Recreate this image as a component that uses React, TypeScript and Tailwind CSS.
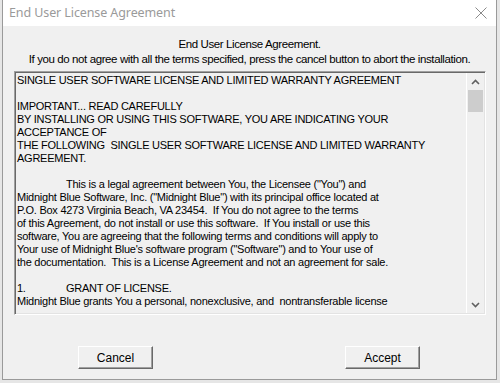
import React from 'react';

const licenseLines: { text: string; indent?: boolean; lead?: string }[] = [
  { text: 'SINGLE USER SOFTWARE LICENSE AND LIMITED WARRANTY AGREEMENT' },
  { text: '' },
  { text: 'IMPORTANT... READ CAREFULLY' },
  { text: 'BY INSTALLING OR USING THIS SOFTWARE, YOU ARE INDICATING YOUR' },
  { text: 'ACCEPTANCE OF' },
  { text: 'THE FOLLOWING  SINGLE USER SOFTWARE LICENSE AND LIMITED WARRANTY' },
  { text: 'AGREEMENT.' },
  { text: '' },
  { text: 'This is a legal agreement between You, the Licensee ("You") and', indent: true },
  { text: 'Midnight Blue Software, Inc. ("Midnight Blue") with its principal office located at' },
  { text: 'P.O. Box 4273 Virginia Beach, VA 23454.  If You do not agree to the terms' },
  { text: 'of this Agreement, do not install or use this software.  If You install or use this' },
  { text: 'software, You are agreeing that the following terms and conditions will apply to' },
  { text: "Your use of Midnight Blue's software program (\"Software\") and to Your use of" },
  { text: 'the documentation.  This is a License Agreement and not an agreement for sale.' },
  { text: '' },
  { text: 'GRANT OF LICENSE.', indent: true, lead: '1.' },
  { text: 'Midnight Blue grants You a personal, nonexclusive, and  nontransferable license' },
];

const DialogButton = ({ label }: { label: string }) => (
  <button className="w-[75px] h-[23px] bg-[#f0f0f0] border border-t-white border-l-white border-r-[#696969] border-b-[#696969] shadow-[inset_-1px_-1px_0_#a0a0a0] text-[12px] text-black leading-none">
    {label}
  </button>
);

export default function App() {
  return (
    <div className="w-[500px] h-[383px] bg-[#e6e6e6] overflow-hidden flex" style={{ fontFamily: '"Liberation Sans", Arial, sans-serif' }}>
      <div className="ml-[2px] w-[495px] h-[380px] border border-t-0 border-[#9a9a9a] bg-[#f0f0f0] flex flex-col">
        {/* Title bar */}
        <div className="h-[26px] bg-white flex items-center justify-between pl-[6px] pr-[9px]">
          <span className="text-[12.5px] text-[#9a9a9a] tracking-[-0.1px]" style={{ fontFamily: '"Noto Sans", sans-serif' }}>
            End User License Agreement
          </span>
          <svg width="12" height="12" viewBox="0 0 12 12" className="mb-[1px]">
            <path d="M0.5 0.5 L11.5 11.5 M11.5 0.5 L0.5 11.5" stroke="#8a8a8a" strokeWidth="1" />
          </svg>
        </div>

        {/* Header */}
        <div className="pt-[11px] text-center text-black text-[11.5px] leading-[15px] tracking-[-0.4px]">
          <div>End User License Agreement.</div>
          <div>If you do not agree with all the terms specified, press the cancel button to abort the installation.</div>
        </div>

        {/* License text */}
        <div className="mt-[4px] ml-[11px] w-[472px] h-[244px] flex border border-t-[#a0a0a0] border-l-[#a0a0a0] border-r-white border-b-white shadow-[inset_1px_1px_0_#696969,inset_-1px_-1px_0_#e3e3e3] overflow-hidden">
          <div className="flex-1 pl-[2px] pt-[2px] text-[11px] leading-[13px] text-black tracking-[-0.25px] whitespace-pre overflow-hidden">
            {licenseLines.map((line, i) => (
              <div key={i} className="h-[13px] flex">
                {line.lead !== undefined ? (
                  <span className="w-[49px]">{line.lead}</span>
                ) : line.indent ? (
                  <span className="w-[49px]" />
                ) : null}
                <span>{line.text}</span>
              </div>
            ))}
          </div>
          {/* Scrollbar */}
          <div className="w-[18px] my-[1px] mr-[1px] bg-[#f0f0f0] border-l border-white flex flex-col items-center">
            <div className="h-[17px] w-full flex items-center justify-center">
              <svg width="9" height="6" viewBox="0 0 9 6">
                <path d="M1 5 L4.5 1.5 L8 5" stroke="#606060" strokeWidth="1.6" fill="none" />
              </svg>
            </div>
            <div className="w-[15px] h-[22px] bg-[#cdcdcd]" />
            <div className="flex-1" />
            <div className="h-[17px] w-full flex items-center justify-center">
              <svg width="9" height="6" viewBox="0 0 9 6">
                <path d="M1 1 L4.5 4.5 L8 1" stroke="#606060" strokeWidth="1.6" fill="none" />
              </svg>
            </div>
          </div>
        </div>

        {/* Buttons */}
        <div className="mt-[31px] flex justify-between pl-[75px] pr-[76px]">
          <DialogButton label="Cancel" />
          <DialogButton label="Accept" />
        </div>
      </div>
    </div>
  );
}
